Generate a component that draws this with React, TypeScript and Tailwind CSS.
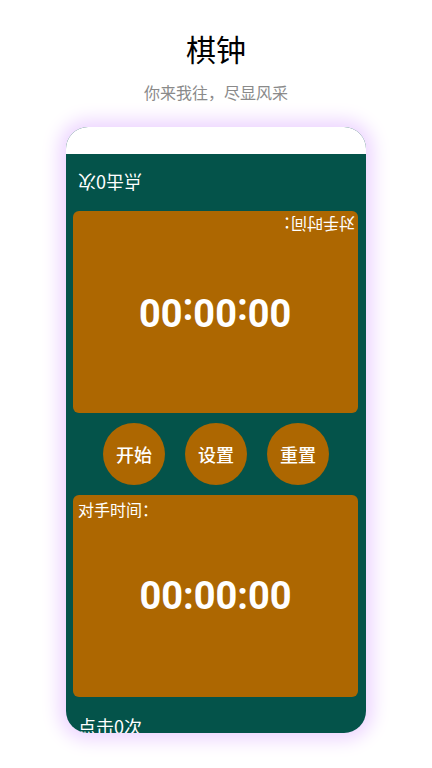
import React from 'react';

const cjk = { fontFamily: '"Noto Sans CJK SC", "Noto Sans", sans-serif' };
const digits = { fontFamily: 'Roboto, "Noto Sans", sans-serif' };

function TimerPanel({ flipped }: { flipped?: boolean }) {
    return (
        <div className="relative h-[202px] rounded-[6px] bg-[#ad6701]">
            {flipped ? (
                <div className="absolute right-[3px] top-[3px] rotate-180 text-[16px] leading-[22px] text-white" style={cjk}>
                    对手时间：
                </div>
            ) : (
                <div className="absolute left-[5px] top-[3px] text-[16px] leading-[22px] text-white" style={cjk}>
                    对手时间：
                </div>
            )}
            <div className="flex h-full items-center justify-center">
                <span
                    className={`text-[38px] font-bold leading-none text-white ${flipped ? 'rotate-180' : ''}`}
                    style={digits}
                >
                    00:00:00
                </span>
            </div>
        </div>
    );
}

function RoundButton({ label }: { label: string }) {
    return (
        <button className="flex h-[62px] w-[62px] items-center justify-center rounded-full bg-[#ad6701] text-[18px] font-medium text-white" style={cjk}>
            {label}
        </button>
    );
}

export default function App() {
    return (
        <div className="h-[768px] w-[432px] overflow-hidden bg-white">
            {/* Header */}
            <div className="pt-[28px] text-center text-[30px] leading-[40px] text-black" style={cjk}>
                棋钟
            </div>
            <div className="mt-[12px] text-center text-[16px] leading-[24px] text-[#8a8a8a]" style={cjk}>
                你来我往，尽显风采
            </div>

            {/* Phone frame */}
            <div className="mx-auto mt-[23px] h-[606px] w-[300px] overflow-hidden rounded-[22px] bg-[#04534a] shadow-[0_0_18px_7px_#edd5ff]">
                <div className="h-[27px] bg-white" />
                <div className="px-[7px] pr-[8px]">
                    <div className="flex h-[57px] items-center pl-[5px]">
                        <span className="rotate-180 text-[18px] text-white" style={cjk}>
                            点击0次
                        </span>
                    </div>
                    <TimerPanel flipped />
                    <div className="flex h-[82px] items-center justify-center gap-[20px] pl-[1px]">
                        <RoundButton label="开始" />
                        <RoundButton label="设置" />
                        <RoundButton label="重置" />
                    </div>
                    <TimerPanel />
                    <div className="pl-[5px] pt-[17px] text-[18px] leading-[24px] text-white" style={cjk}>
                        点击0次
                    </div>
                </div>
            </div>
        </div>
    );
}
